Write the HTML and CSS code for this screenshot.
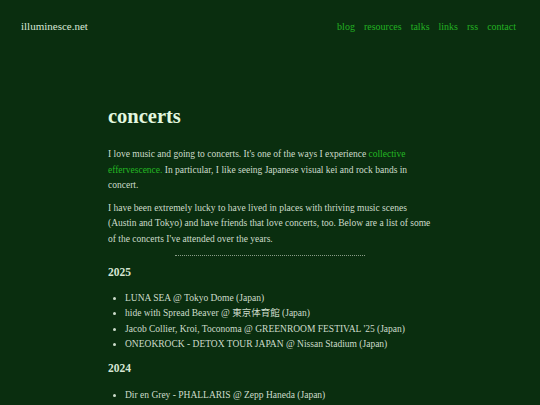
FILE: index.html
```
<!DOCTYPE html>
<html>
<head>
<meta charset="utf-8">
<link rel="stylesheet" href="styles.css">
</head>
<body>
<header class="site-header">
  <a class="site-title" href="#">illuminesce.net</a>
  <nav class="nav">
    <a href="#">blog</a>
    <a href="#">resources</a>
    <a href="#">talks</a>
    <a href="#">links</a>
    <a href="#">rss</a>
    <a href="#">contact</a>
  </nav>
</header>
<main class="content">
  <h1 class="title">concerts</h1>
  <p>I love music and going to concerts. It's one of the ways I experience <a href="#">collective effervescence.</a> In particular, I like seeing Japanese visual kei and rock bands in concert.</p>
  <p>I have been extremely lucky to have lived in places with thriving music scenes (Austin and Tokyo) and have friends that love concerts, too. Below are a list of some of the concerts I've attended over the years.</p>
  <hr class="divider">
  <h2 class="year">2025</h2>
  <ul class="list">
    <li>LUNA SEA @ Tokyo Dome (Japan)</li>
    <li>hide with Spread Beaver @ 東京体育館 (Japan)</li>
    <li>Jacob Collier, Kroi, Toconoma @ GREENROOM FESTIVAL '25 (Japan)</li>
    <li>ONEOKROCK - DETOX TOUR JAPAN @ Nissan Stadium (Japan)</li>
  </ul>
  <h2 class="year">2024</h2>
  <ul class="list">
    <li>Dir en Grey - PHALLARIS @ Zepp Haneda (Japan)</li>
  </ul>
</main>
</body>
</html>
```
FILE: styles.css
```
html, body {
  margin: 0;
  padding: 0;
  background: #0a2e0f;
}
body {
  font-family: "Liberation Serif", "Noto Sans CJK JP", serif;
  color: #cddccb;
  font-size: 9.5px;
  line-height: 15.3px;
}
a {
  color: #24b824;
  text-decoration: none;
}
.site-header {
  display: flex;
  justify-content: space-between;
  align-items: baseline;
  padding: 19px 24px 0 21px;
}
.site-title {
  color: #d8e7d6;
  font-size: 11px;
}
.nav {
  display: flex;
  gap: 9px;
  font-size: 10px;
}
.nav a {
  color: #22b022;
}
.content {
  width: 324px;
  margin: 0 auto;
  padding-top: 70px;
}
.title {
  font-size: 20.5px;
  line-height: 24px;
  color: #e2f7df;
  margin: 0 0 19px 0;
}
p {
  margin: 0 0 8px 0;
}
.divider {
  width: 190px;
  border: 0;
  border-top: 1px dotted #8a9c88;
  margin: 3px auto 9px auto;
}
.year {
  font-size: 11.5px;
  line-height: 14px;
  color: #d7e6d4;
  margin: 0 0 12px 0;
}
.list {
  margin: 0 0 9px 0;
  padding-left: 17px;
}
.list + .year {
  margin-bottom: 13px;
}
.list li {
  line-height: 15.3px;
}
```
